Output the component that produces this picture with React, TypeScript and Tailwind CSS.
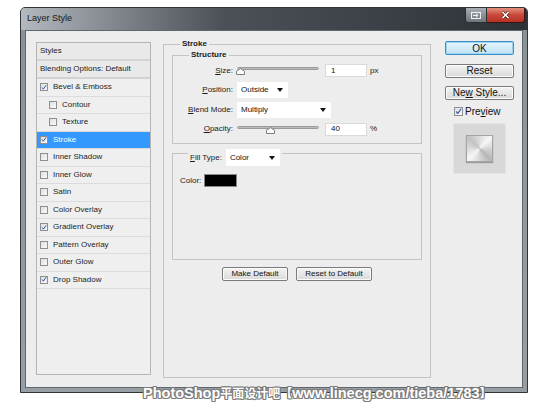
import { ReactNode } from 'react';

// Photoshop "Layer Style" dialog, Win7 frame

const styleRows: { label: string; on?: boolean; indent?: boolean; selected?: boolean }[] = [
  { label: 'Bevel & Emboss', on: true },
  { label: 'Contour', indent: true },
  { label: 'Texture', indent: true },
  { label: 'Stroke', on: true, selected: true },
  { label: 'Inner Shadow' },
  { label: 'Inner Glow' },
  { label: 'Satin' },
  { label: 'Color Overlay' },
  { label: 'Gradient Overlay', on: true },
  { label: 'Pattern Overlay' },
  { label: 'Outer Glow' },
  { label: 'Drop Shadow', on: true },
];

function Check({ on, big }: { on?: boolean; big?: boolean }) {
  return (
    <span
      className={`flex shrink-0 items-center justify-center border border-[#8f8f8f] bg-gradient-to-br from-[#dedede] to-[#fbfbfb] ${
        big ? 'h-[9px] w-[9px]' : 'h-[8px] w-[8px]'
      }`}
    >
      {on && (
        <svg width="7" height="7" viewBox="0 0 8 8" fill="none">
          <path d="M1.6 4.3 3.2 6.2 6.6 1.4" stroke="#2c4fb0" strokeWidth="1.3" strokeLinecap="round" strokeLinejoin="round" />
        </svg>
      )}
    </span>
  );
}

function Slider({ pct }: { pct: number }) {
  const left = 3 + (pct / 100) * 76 - 4.5;
  return (
    <div className="relative h-[11px] w-[82px]">
      <div className="mt-[2px] h-[3px] w-full rounded-full border border-[#9a9a9a] bg-gradient-to-b from-[#9c9c9c] to-[#dadada]" />
      <svg className="absolute top-[3px]" style={{ left }} width="9" height="7" viewBox="0 0 9 7">
        <path d="M0.5 6.5V3.2L4.5 0.6 8.5 3.2V6.5Z" fill="#fbfbfb" stroke="#7d7d7d" />
      </svg>
    </div>
  );
}

function Select({ value, className }: { value: string; className: string }) {
  return (
    <div className={`flex items-center justify-between bg-white pl-[4px] pr-[5px] text-[8px] text-[#111] ${className}`}>
      <span>{value}</span>
      <svg width="6" height="4" viewBox="0 0 6 4">
        <path d="M0 0H6L3 4Z" fill="#111" />
      </svg>
    </div>
  );
}

function Field({ value }: { value: string }) {
  return (
    <div className="flex h-[13px] w-[42px] items-center border border-[#dadada] bg-white pl-[5px] text-[8px] text-[#111]">
      {value}
    </div>
  );
}

function Row({ label, children }: { label: ReactNode; children: ReactNode }) {
  return (
    <div className="flex h-[19.5px] items-center">
      <div className="w-[52px] text-right text-[8px] text-[#1b1b1b]">{label}</div>
      <div className="ml-[4px] flex items-center">{children}</div>
    </div>
  );
}

function WinButton({ children, focus, className }: { children: ReactNode; focus?: boolean; className?: string }) {
  return (
    <div
      className={`flex h-[14px] items-center justify-center rounded-[2px] border text-[#111] ${
        focus
          ? 'border-[#3c8ec4] bg-gradient-to-b from-[#e8f6fd] to-[#bfe3f6] shadow-[inset_0_0_0_1px_#9ad6f3]'
          : 'border-[#7a7a7a] bg-gradient-to-b from-[#f4f4f4] to-[#d9d9d9] shadow-[inset_0_0_0_1px_#fcfcfc]'
      } ${className ?? ''}`}
    >
      <span>{children}</span>
    </div>
  );
}

export default function App() {
  return (
    <div className="relative h-[413px] w-[550px] overflow-hidden bg-white font-['Liberation_Sans',Arial,sans-serif]">
      <div className="pl-[20px] pt-[7px]">
        {/* window frame */}
        <div className="flex h-[386px] w-[508px] flex-col rounded-t-[5px] border border-[#30353a] bg-gradient-to-b from-[#8a9197] to-[#979ea4]">
          {/* title bar */}
          <div className="flex h-[22px] shrink-0 items-start justify-between rounded-t-[4px] bg-gradient-to-r from-[#b3b9be] via-[#4b5157] via-40% to-[#2d3237]">
            <span className="ml-[6px] mt-[5px] text-[9px] leading-[11px] text-[#15181b]">Layer Style</span>
            <div className="mr-[2px] flex">
              <div className="flex h-[15px] w-[22px] items-center justify-center rounded-bl-[3px] border border-t-0 border-[#2b2f33] bg-gradient-to-b from-[#a8aeb3] to-[#6f767c]">
                <svg width="10" height="7" viewBox="0 0 10 7" fill="none">
                  <rect x="0.5" y="0.5" width="9" height="6" stroke="#eef1f3" />
                  <path d="M2 3.5H7M5 2 7 3.5 5 5" stroke="#eef1f3" />
                </svg>
              </div>
              <div className="flex h-[15px] w-[38px] items-center justify-center rounded-br-[3px] border border-l-0 border-t-0 border-[#3a1612] bg-gradient-to-b from-[#e3907f] via-[#c9473a] to-[#b83224]">
                <svg width="9" height="8" viewBox="0 0 9 8">
                  <path d="M1.5 1 7.5 7M7.5 1 1.5 7" stroke="#5a1b14" strokeWidth="3" />
                  <path d="M1.5 1 7.5 7M7.5 1 1.5 7" stroke="#fff" strokeWidth="1.6" />
                </svg>
              </div>
            </div>
          </div>

          {/* client area */}
          <div className="mx-[4px] mb-[4px] flex flex-1 items-start border border-[#5f666c] bg-[#ededed]">
            {/* styles list */}
            <div className="ml-[10px] mt-[11px] flex h-[333px] w-[115px] flex-col border border-[#b4b4b4] bg-[#efefef] text-[8px] text-[#1d1d1d]">
              <div className="flex h-[18px] shrink-0 items-center border-b-2 border-[#d3d3d3] bg-[#e9e9e9] pl-[3px]">Styles</div>
              <div className="flex h-[18px] shrink-0 items-center border-b-2 border-[#d3d3d3] bg-[#e9e9e9] pl-[3px]">
                Blending Options: Default
              </div>
              {styleRows.map((r) => (
                <div
                  key={r.label}
                  className={`flex h-[17.5px] shrink-0 items-center gap-[5px] border-b border-[#dcdcdc] ${
                    r.indent ? 'pl-[12px]' : 'pl-[3px]'
                  } ${r.selected ? 'bg-[#3399ff] text-white' : ''}`}
                >
                  <Check on={r.on} />
                  <span>{r.label}</span>
                </div>
              ))}
            </div>

            {/* Stroke settings */}
            <fieldset className="ml-[12px] mt-[8px] h-[339px] w-[268px] border border-[#c3c3c3] px-[8px] pt-[1px]">
              <legend className="ml-[8px] px-[2px] text-[8px] font-bold leading-[10px] text-[#1b1b1b]">Stroke</legend>

              <fieldset className="border border-[#c3c3c3] pl-[8px] pr-[7px] pb-[4px] pt-[1px]">
                <legend className="ml-[8px] px-[2px] text-[8px] font-bold leading-[10px] text-[#1b1b1b]">Structure</legend>
                <Row
                  label={
                    <>
                      <u>S</u>ize:
                    </>
                  }
                >
                  <Slider pct={0} />
                  <div className="ml-[6px]">
                    <Field value="1" />
                  </div>
                  <span className="ml-[3px] text-[8px] text-[#1b1b1b]">px</span>
                </Row>
                <Row
                  label={
                    <>
                      <u>P</u>osition:
                    </>
                  }
                >
                  <Select value="Outside" className="h-[16px] w-[51px]" />
                </Row>
                <Row
                  label={
                    <>
                      <u>B</u>lend Mode:
                    </>
                  }
                >
                  <Select value="Multiply" className="h-[16px] w-[94px]" />
                </Row>
                <Row
                  label={
                    <>
                      <u>O</u>pacity:
                    </>
                  }
                >
                  <Slider pct={40} />
                  <div className="ml-[6px]">
                    <Field value="40" />
                  </div>
                  <span className="ml-[3px] text-[8px] text-[#1b1b1b]">%</span>
                </Row>
              </fieldset>

              <fieldset className="mt-[-3px] h-[119px] border border-[#c3c3c3] px-[7px]">
                <legend className="ml-[8px] flex items-center px-[2px] pt-[8px] text-[8px] text-[#1b1b1b]">
                  <span>
                    <u>F</u>ill Type:
                  </span>
                  <Select value="Color" className="ml-[4px] h-[17px] w-[54px]" />
                </legend>
                <div className="mt-[8px] flex items-center text-[8px] text-[#1b1b1b]">
                  <span>Color:</span>
                  <span className="ml-[3px] h-[13px] w-[33px] border border-[#8a8a8a] bg-black" />
                </div>
              </fieldset>

              <div className="mt-[7px] flex justify-center gap-[8px] text-[8px]">
                <WinButton className="w-[66px]">Make Default</WinButton>
                <WinButton className="w-[76px]">Reset to Default</WinButton>
              </div>
            </fieldset>

            {/* dialog buttons */}
            <div className="ml-[14px] mt-[10px] flex w-[69px] flex-col text-[10px]">
              <WinButton focus>OK</WinButton>
              <WinButton className="mt-[8.5px]">Reset</WinButton>
              <WinButton className="mt-[8px]">
                Ne<u>w</u> Style...
              </WinButton>
              <div className="ml-[9px] mt-[7px] flex h-[10px] items-center gap-[2px] text-[#111]">
                <Check on big />
                <span>
                  Pre<u>v</u>iew
                </span>
              </div>
              <div className="ml-[8px] mt-[6px] flex h-[51px] w-[53px] items-center justify-center border border-[#e4e4e4] bg-[#d8d8d8]">
                <div className="h-[27px] w-[27px] border border-[#a5a5a5] bg-[conic-gradient(from_45deg,#f6f6f6,#b7b7b7,#f6f6f6,#c2c2c2,#f6f6f6)] shadow-[0_1px_1px_#9a9a9a]" />
              </div>
            </div>
          </div>
        </div>
      </div>

      {/* watermark over the frame */}
      <div className="absolute left-[143px] top-[385px] whitespace-nowrap text-[14.5px] font-bold leading-[16px] text-white [text-shadow:1px_0_#7d7d7d,-1px_0_#7d7d7d,0_1px_#7d7d7d,0_-1px_#7d7d7d,1px_1px_#7d7d7d,-1px_-1px_#7d7d7d,1px_-1px_#7d7d7d,-1px_1px_#7d7d7d]">
        PhotoShop
        <span className="font-['Noto_Sans_CJK_SC',sans-serif] text-[12px]">平面设计吧【</span>
        www.linecg.com/tieba/1783
        <span className="font-['Noto_Sans_CJK_SC',sans-serif] text-[12px]">】</span>
      </div>
    </div>
  );
}
